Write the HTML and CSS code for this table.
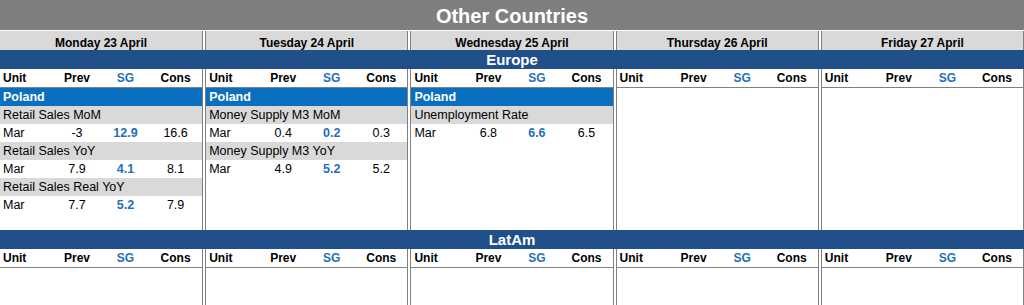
FILE: index.html
```html
<!DOCTYPE html>
<html lang="en">
<head>
    <meta charset="UTF-8">
    <meta name="viewport" content="width=device-width, initial-scale=1.0">
    <title>Other Countries</title>
    <link rel="stylesheet" href="styles.css">
</head>
<body>
    <div class="sheet">
        <div class="title">Other Countries</div>

        <!-- Day headers -->
        <div class="week">
            <div class="col day">Monday 23 April</div>
            <div class="col day">Tuesday 24 April</div>
            <div class="col day">Wednesday 25 April</div>
            <div class="col day">Thursday 26 April</div>
            <div class="col day">Friday 27 April</div>
        </div>

        <!-- Europe -->
        <div class="region">Europe</div>
        <div class="week block">
            <div class="col">
                <div class="row head"><span>Unit</span><span>Prev</span><span class="sg">SG</span><span>Cons</span></div>
                <div class="country">Poland</div>
                <div class="indicator">Retail Sales MoM</div>
                <div class="row"><span>Mar</span><span>-3</span><span class="sg">12.9</span><span>16.6</span></div>
                <div class="indicator">Retail Sales YoY</div>
                <div class="row"><span>Mar</span><span>7.9</span><span class="sg">4.1</span><span>8.1</span></div>
                <div class="indicator">Retail Sales Real YoY</div>
                <div class="row"><span>Mar</span><span>7.7</span><span class="sg">5.2</span><span>7.9</span></div>
            </div>
            <div class="col">
                <div class="row head"><span>Unit</span><span>Prev</span><span class="sg">SG</span><span>Cons</span></div>
                <div class="country">Poland</div>
                <div class="indicator">Money Supply M3 MoM</div>
                <div class="row"><span>Mar</span><span>0.4</span><span class="sg">0.2</span><span>0.3</span></div>
                <div class="indicator">Money Supply M3 YoY</div>
                <div class="row"><span>Mar</span><span>4.9</span><span class="sg">5.2</span><span>5.2</span></div>
            </div>
            <div class="col">
                <div class="row head"><span>Unit</span><span>Prev</span><span class="sg">SG</span><span>Cons</span></div>
                <div class="country">Poland</div>
                <div class="indicator">Unemployment Rate</div>
                <div class="row"><span>Mar</span><span>6.8</span><span class="sg">6.6</span><span>6.5</span></div>
            </div>
            <div class="col">
                <div class="row head"><span>Unit</span><span>Prev</span><span class="sg">SG</span><span>Cons</span></div>
            </div>
            <div class="col">
                <div class="row head"><span>Unit</span><span>Prev</span><span class="sg">SG</span><span>Cons</span></div>
            </div>
        </div>

        <!-- LatAm -->
        <div class="region">LatAm</div>
        <div class="week block">
            <div class="col">
                <div class="row head"><span>Unit</span><span>Prev</span><span class="sg">SG</span><span>Cons</span></div>
            </div>
            <div class="col">
                <div class="row head"><span>Unit</span><span>Prev</span><span class="sg">SG</span><span>Cons</span></div>
            </div>
            <div class="col">
                <div class="row head"><span>Unit</span><span>Prev</span><span class="sg">SG</span><span>Cons</span></div>
            </div>
            <div class="col">
                <div class="row head"><span>Unit</span><span>Prev</span><span class="sg">SG</span><span>Cons</span></div>
            </div>
            <div class="col">
                <div class="row head"><span>Unit</span><span>Prev</span><span class="sg">SG</span><span>Cons</span></div>
            </div>
        </div>
    </div>
</body>
</html>
```

FILE: styles.css
```css
/* Basic reset */
* {
    box-sizing: border-box;
    margin: 0;
    padding: 0;
}

body {
    background-color: #ffffff;
    font-family: "Liberation Sans", Arial, sans-serif;
    font-size: 12px;
    color: #000;
}

.sheet {
    width: 1024px;
}

/* Title bar */
.title {
    height: 30px;
    margin-bottom: 1px;
    background-color: #7f7f7f;
    color: #ffffff;
    font-size: 20px;
    font-weight: bold;
    line-height: 32px;
    text-align: center;
}

/* Five day columns with a double rule between them */
.week {
    display: grid;
    grid-template-columns: repeat(5, 1fr);
    column-gap: 2px;
}

.col {
    border-left: 1px solid #808080;
    border-right: 1px solid #808080;
}

.col:first-child {
    border-left: none;
}

.day {
    height: 19px;
    background-color: #d9d9d9;
    font-weight: bold;
    line-height: 24px;
    text-align: center;
}

.block {
    height: 161px;
}

.block:last-child {
    height: 60px;
}

/* Region band */
.region {
    height: 19px;
    background-color: #204f8a;
    color: #ffffff;
    font-size: 15px;
    font-weight: bold;
    line-height: 20px;
    text-align: center;
}

/* Table rows */
.row {
    display: grid;
    grid-template-columns: 52px 50px 47px 1fr;
    height: 18px;
    line-height: 19px;
    font-size: 12.5px;
}

.row span {
    text-align: center;
}

.row span:first-child {
    padding-left: 3px;
    text-align: left;
}

.row .sg {
    color: #1f6fb9;
    font-weight: bold;
}

.head {
    height: 19px;
    border-bottom: 1px solid #808080;
    font-size: 12px;
    font-weight: bold;
}

.country {
    height: 18px;
    padding-left: 3px;
    background-color: #0b6fc0;
    color: #ffffff;
    font-weight: bold;
    font-size: 12.5px;
    line-height: 19px;
}

.indicator {
    height: 18px;
    padding-left: 3px;
    background-color: #d9d9d9;
    font-size: 12.5px;
    line-height: 19px;
}
```
